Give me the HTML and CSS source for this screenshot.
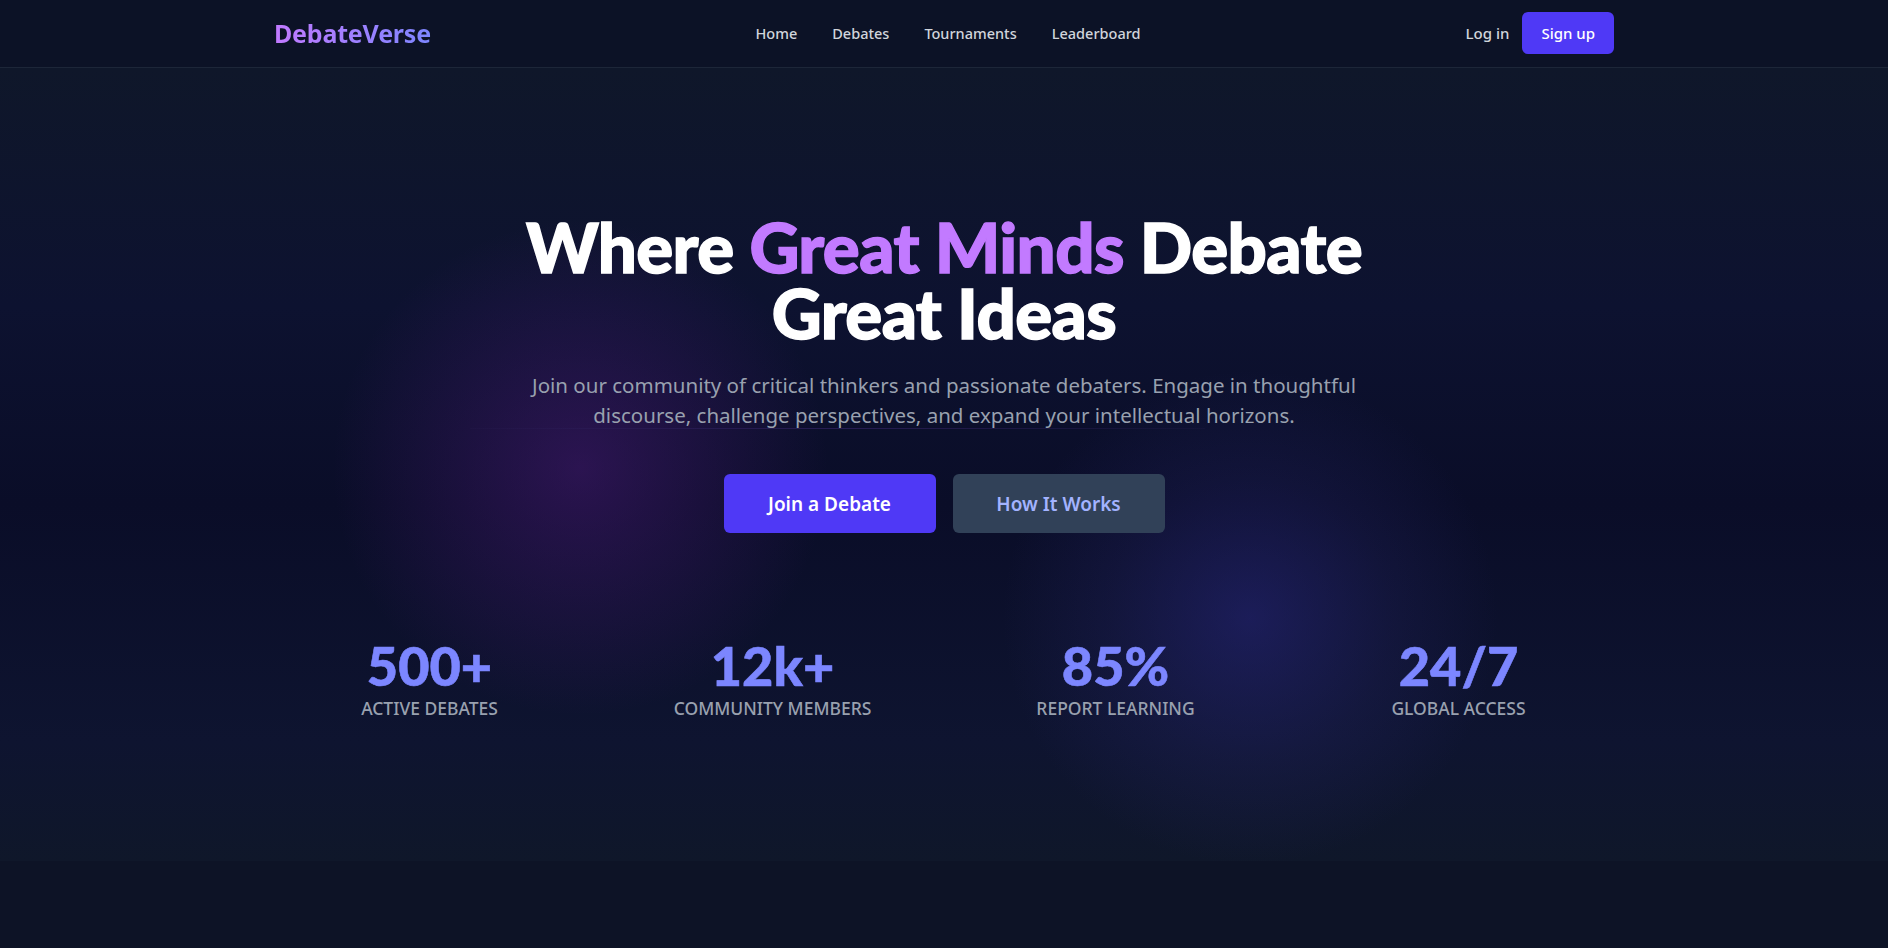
FILE: index.html
```html
<!DOCTYPE html>
<html lang="en">
<head>
<meta charset="utf-8">
<title>DebateVerse</title>
<link rel="stylesheet" href="styles.css">
</head>
<body>
<header class="nav">
  <div class="container nav-inner">
    <a class="logo" href="#">DebateVerse</a>
    <nav class="nav-links">
      <a href="#">Home</a>
      <a href="#">Debates</a>
      <a href="#">Tournaments</a>
      <a href="#">Leaderboard</a>
    </nav>
    <div class="nav-auth">
      <a class="login" href="#">Log in</a>
      <a class="signup" href="#">Sign up</a>
    </div>
  </div>
</header>
<main>
  <section class="hero">
    <div class="glow glow-purple"></div>
    <div class="glow glow-blue"></div>
    <div class="seam"></div>
    <div class="container hero-inner">
      <h1 class="title">Where <span class="accent">Great Minds</span> Debate<br>Great Ideas</h1>
      <p class="subtitle">Join our community of critical thinkers and passionate debaters. Engage in thoughtful<br>discourse, challenge perspectives, and expand your intellectual horizons.</p>
      <div class="actions">
        <a class="btn btn-primary" href="#">Join a Debate</a>
        <a class="btn btn-secondary" href="#">How It Works</a>
      </div>
      <div class="stats">
        <div class="stat"><div class="stat-num">500+</div><div class="stat-label">Active Debates</div></div>
        <div class="stat"><div class="stat-num">12k+</div><div class="stat-label">Community Members</div></div>
        <div class="stat"><div class="stat-num">85%</div><div class="stat-label">Report Learning</div></div>
        <div class="stat"><div class="stat-num">24/7</div><div class="stat-label">Global Access</div></div>
      </div>
    </div>
  </section>
  <section class="after"></section>
</main>
</body>
</html>
```

FILE: styles.css
```css
* { box-sizing: border-box; }
html, body { margin: 0; padding: 0; }
body {
  background: #0d1326;
  font-family: "Noto Sans", "Open Sans", sans-serif;
  color: #fff;
  overflow: hidden;
}
a { text-decoration: none; color: inherit; }

.container {
  width: 1340px;
  margin: 0 auto;
}

.nav {
  background: #0c1226;
  border-bottom: 1px solid #1d2638;
  height: 68px;
}
.nav-inner {
  height: 66px;
  display: flex;
  align-items: center;
  justify-content: space-between;
}
.logo {
  font-size: 25px;
  font-weight: 700;
  letter-spacing: -0.2px;
  background: linear-gradient(90deg, #c27aff, #7c86ff);
  -webkit-background-clip: text;
  background-clip: text;
  color: transparent;
  width: 160px;
}
.nav-links {
  display: flex;
  gap: 35px;
  font-size: 14.5px;
  font-weight: 500;
  color: #d1d5dc;
  margin-left: 8px;
}
.nav-auth {
  display: flex;
  align-items: center;
  gap: 13px;
  font-size: 15px;
  font-weight: 500;
  width: 160px;
  justify-content: flex-end;
}
.login { color: #d1d5dc; }
.signup {
  background: #4f39f6;
  color: #fff;
  border-radius: 6px;
  padding: 10px 19px;
  line-height: 22px;
}

.hero {
  position: relative;
  height: 793px;
  overflow: hidden;
  background: linear-gradient(180deg, #0f172a 0%, #0d1230 30%, #0a0d28 55%, #0e1430 85%, #0f172a 100%);
}
.glow {
  position: absolute;
  border-radius: 50%;
  pointer-events: none;
}
.glow-purple {
  left: 330px;
  top: 150px;
  width: 500px;
  height: 500px;
  background: radial-gradient(circle, rgba(88, 28, 135, 0.42) 0%, rgba(88, 28, 135, 0.18) 40%, rgba(88, 28, 135, 0) 70%);
}
.glow-blue {
  left: 1000px;
  top: 300px;
  width: 500px;
  height: 500px;
  background: radial-gradient(circle, rgba(49, 46, 150, 0.42) 0%, rgba(49, 46, 129, 0.18) 40%, rgba(49, 46, 129, 0) 70%);
}
.seam {
  position: absolute;
  left: 470px;
  width: 735px;
  top: 360px;
  height: 1px;
  background: linear-gradient(90deg, rgba(40, 30, 80, 0.2), rgba(50, 35, 100, 0.7), rgba(40, 30, 80, 0.2));
}
.hero-inner {
  position: relative;
  padding-top: 146px;
  text-align: center;
}
.title {
  margin: 0;
  font-family: "Lato", "Noto Sans", sans-serif;
  font-weight: 900;
  font-size: 69px;
  line-height: 66px;
  letter-spacing: -0.6px;
  color: #fff;
  -webkit-text-stroke: 1.4px currentColor;
}
.accent { color: #c27aff; }
.subtitle {
  margin: 24px 0 0;
  font-size: 20.5px;
  line-height: 30px;
  color: #99a1af;
}
.actions {
  margin-top: 44px;
  display: flex;
  justify-content: center;
  gap: 17px;
}
.btn {
  width: 212px;
  height: 59px;
  border-radius: 6px;
  display: flex;
  align-items: center;
  justify-content: center;
  font-size: 19px;
  font-weight: 600;
}
.btn-primary { background: #4f39f6; color: #fff; }
.btn-secondary { background: #314158; color: #a3b3ff; }

.stats {
  margin-top: 100px;
  display: grid;
  grid-template-columns: repeat(4, 1fr);
  gap: 32px;
}
.stat-num {
  font-family: "Lato", "Noto Sans", sans-serif;
  font-size: 54px;
  font-weight: 900;
  line-height: 65px;
  color: #7c86ff;
  -webkit-text-stroke: 0.6px currentColor;
}
.stat-label {
  margin-top: -2px;
  font-size: 17.5px;
  font-weight: 500;
  line-height: 24px;
  text-transform: uppercase;
  color: #99a1af;
}
.after {
  height: 87px;
  background: #0d1326;
}
```
